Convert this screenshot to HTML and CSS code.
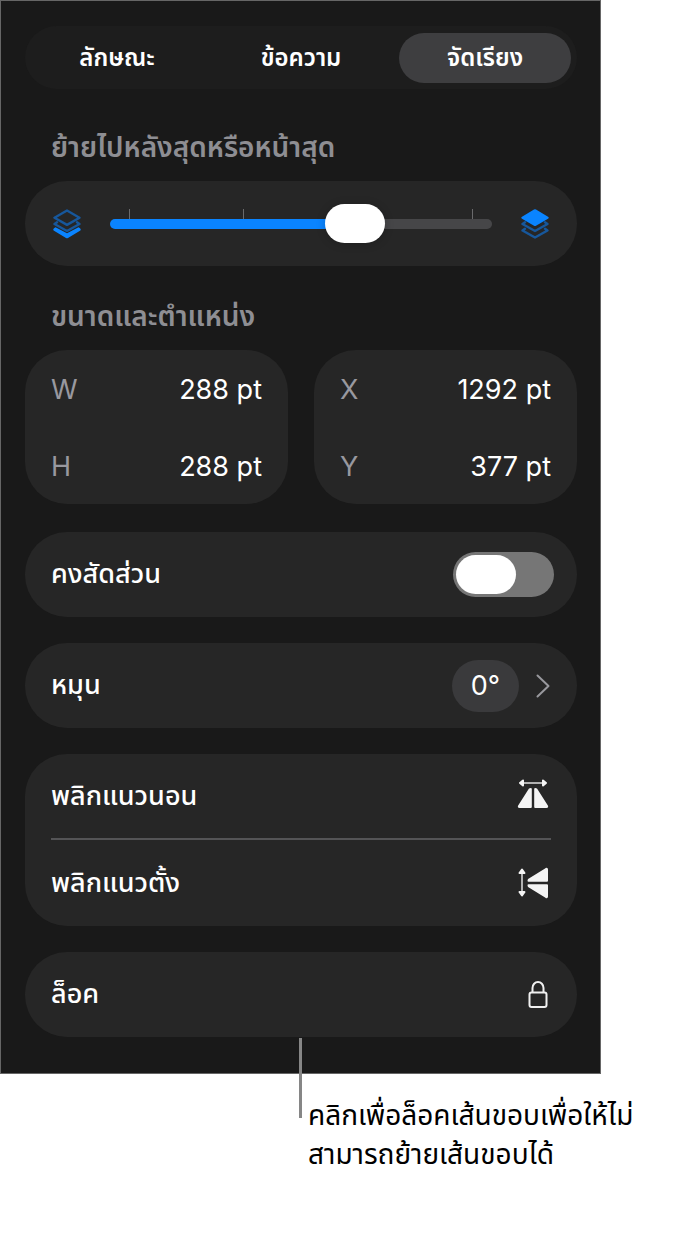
FILE: index.html
```html
<!DOCTYPE html>
<html lang="th">
<head>
  <meta charset="UTF-8">
  <meta name="viewport" content="width=device-width, initial-scale=1.0">
  <title>จัดเรียง</title>
  <link rel="stylesheet" href="styles.css">
</head>
<body>
  <main class="panel">
    <div class="tabs" role="tablist">
      <button class="tab" type="button" role="tab" aria-selected="false">ลักษณะ</button>
      <button class="tab" type="button" role="tab" aria-selected="false">ข้อความ</button>
      <button class="tab active" type="button" role="tab" aria-selected="true">จัดเรียง</button>
    </div>

    <h2 class="heading first"><label for="order">ย้ายไปหลังสุดหรือหน้าสุด</label></h2>
    <div class="card order">
      <svg class="layers" viewBox="0 0 28 30" aria-hidden="true">
        <path class="line" d="M14 1.500 L26.500 8.700 L14 15.900 L1.500 8.700 Z"/>
        <path class="line" d="M4 13.300 L1.500 15 L14 22 L26.500 15 L24 13.300"/>
        <path class="fill" d="M2.500 18.200 L14 24.200 L25.500 18.200 L27 19.200 Q28.500 20.500 27 21.800 L15 29 Q14 29.600 13 29 L1 21.800 Q-.5 20.500 1 19.200 Z"/>
      </svg>
      <div class="slider">
        <div class="ticks"><i></i><i></i><i></i><i></i></div>
        <input type="range" id="order" min="0" max="3" step="1" value="2">
      </div>
      <svg class="layers" viewBox="0 0 28 30" aria-hidden="true">
        <path class="line" d="M4 19.800 L1.500 21.500 L14 28.500 L26.500 21.500 L24 19.800"/>
        <path class="line" d="M4 13.300 L1.500 15 L14 22 L26.500 15 L24 13.300"/>
        <path class="fill" d="M13 .6 Q14 0 15 .6 L27 7.700 Q28.500 8.700 27 9.700 L15 16.800 Q14 17.400 13 16.800 L1 9.700 Q-.5 8.700 1 7.700 Z"/>
      </svg>
    </div>

    <h2 class="heading">ขนาดและตำแหน่ง</h2>
    <div class="fields">
      <div class="card">
        <div class="field"><label for="w">W</label><input type="text" id="w" value="288 pt"></div>
        <div class="field"><label for="h">H</label><input type="text" id="h" value="288 pt"></div>
      </div>
      <div class="card">
        <div class="field"><label for="x">X</label><input type="text" id="x" value="1292 pt"></div>
        <div class="field"><label for="y">Y</label><input type="text" id="y" value="377 pt"></div>
      </div>
    </div>

    <div class="card row">
      <label for="ratio">คงสัดส่วน</label>
      <input class="switch" type="checkbox" role="switch" id="ratio">
    </div>

    <button class="card row" type="button">
      <span>หมุน</span>
      <span class="rotate">
        <span class="angle">0°</span>
        <svg class="chevron" viewBox="0 0 14 24" aria-hidden="true"><path d="M1.500 1.500 L12.500 12 L1.500 22.500"/></svg>
      </span>
    </button>

    <div class="card group">
      <button class="row" type="button">
        <span>พลิกแนวนอน</span>
        <svg class="flip" viewBox="0 0 32 32" aria-hidden="true">
          <path class="arrow" d="M5 3 H27"/>
          <path class="solid" d="M3 3 L6 .5 V5.500 Z M29 3 L26 .5 V5.500 Z"/>
          <path class="solid" d="M12.500 9.500 Q13 9 13.800 9 V27 H2.500 Q1.500 27 2 26 Z M19.500 9.500 Q19 9 18.200 9 V27 H29.500 Q30.500 27 30 26 Z"/>
        </svg>
      </button>
      <button class="row" type="button">
        <span>พลิกแนวตั้ง</span>
        <svg class="flip" viewBox="0 0 32 32" aria-hidden="true">
          <path class="arrow" d="M5 5 V27"/>
          <path class="solid" d="M5 2.500 L7.500 6 H2.500 Z M5 28.500 L7.500 25 H2.500 Z"/>
          <path class="solid" d="M12 12.500 Q11.500 13 11.500 13.800 H30 V2.500 Q30 1.500 29 2 Z M12 19.500 Q11.500 19 11.500 18.200 H30 V29.500 Q30 30.500 29 30 Z"/>
        </svg>
      </button>
    </div>

    <button class="card row" type="button">
      <span>ล็อค</span>
      <svg class="lock" viewBox="0 0 20 28" aria-hidden="true">
        <rect x="1.500" y="11.500" width="17" height="14.500" rx="2"/>
        <path d="M4.500 11.500 V7 A5.500 6 0 0 1 15.500 7 V11.500"/>
      </svg>
    </button>
  </main>

  <p class="callout">คลิกเพื่อล็อคเส้นขอบเพื่อให้ไม่<br>สามารถย้ายเส้นขอบได้</p>
</body>
</html>
```
FILE: styles.css
```css
* {
  box-sizing: border-box;
}
body {
  margin: 0;
  background-color: #fff;
  color: #000;
  font-family: Inter, "Noto Sans Thai", "Noto Sans", sans-serif;
}
button,
input {
  font: inherit;
  color: inherit;
}
button {
  border: none;
  background: none;
  padding: 0;
  text-align: left;
  cursor: pointer;
}
.panel {
  display: flex;
  flex-direction: column;
  max-width: 601px;
  padding: 25px 23px 36px 24px;
  border: 1px solid #666;
  background-color: #191919;
  color: #fff;
  font-size: 27px;
}
.tabs {
  display: grid;
  grid-template-columns: repeat(3, 1fr);
  border-radius: 32px;
  background-color: #1d1d1d;
}
.tab {
  height: 50px;
  margin: 7px 6px 6px;
  padding-top: 2px;
  border-radius: 25px;
  font-size: 24px;
  font-weight: 600;
  text-align: center;
}
.tab.active {
  background-color: #3e3e40;
}
.heading {
  margin: 30px 26px 14px;
  color: #8e8e93;
  font-size: 28px;
  font-weight: 600;
  line-height: 40px;
}
.heading.first {
  margin-top: 38px;
}
.card {
  border-radius: 42px;
  background-color: #262626;
}
.order {
  display: flex;
  align-items: center;
  gap: 29px;
  height: 85px;
  padding: 0 28px;
}
.layers {
  width: 28px;
  height: 30px;
}
.layers .fill {
  fill: #0a84ff;
}
.layers .line {
  fill: none;
  stroke: #17579b;
  stroke-width: 2.4;
  stroke-linejoin: round;
  stroke-linecap: round;
}
.slider {
  flex: 1;
  position: relative;
}
.ticks {
  position: absolute;
  inset: 5px 19px auto;
  display: flex;
  justify-content: space-between;
}
.ticks i {
  width: 1px;
  height: 10px;
  background-color: #6a6a6c;
}
.slider input {
  position: relative;
  display: block;
  appearance: none;
  width: 100%;
  height: 39px;
  margin: 0;
  background: none;
}
.slider input::-webkit-slider-runnable-track {
  height: 10px;
  border-radius: 5px;
  background: linear-gradient(to right, #0a84ff 65%, #464648 65%);
}
.slider input::-webkit-slider-thumb {
  appearance: none;
  width: 60px;
  height: 39px;
  margin-top: -15px;
  border-radius: 20px;
  background-color: #fff;
  box-shadow: 0 1px 10px rgba(0, 0, 0, 0.2);
}
.fields {
  display: grid;
  grid-template-columns: repeat(2, minmax(0, 1fr));
  gap: 26px;
  margin-bottom: 2px;
}
.field {
  display: flex;
  align-items: center;
  height: 77px;
  padding: 2px 26px 0;
}
.field label {
  color: #98989f;
}
.field input {
  flex: 1;
  min-width: 0;
  padding: 0;
  border: none;
  background: none;
  text-align: right;
}
.row {
  display: flex;
  align-items: center;
  justify-content: space-between;
  height: 85px;
  padding: 0 26px;
  font-weight: 500;
}
.card.row {
  margin-top: 26px;
}
.switch {
  appearance: none;
  width: 101px;
  height: 45px;
  margin: 0 -3px 0 0;
  padding: 3px;
  border-radius: 23px;
  background-color: #767676;
}
.switch::before {
  content: "";
  display: block;
  width: 60px;
  height: 39px;
  border-radius: 20px;
  background-color: #fff;
}
.switch:checked {
  background-color: #30d158;
}
.switch:checked::before {
  margin-left: auto;
}
.rotate {
  display: flex;
  align-items: center;
  gap: 17px;
  margin-right: 1px;
  font-weight: 400;
}
.angle {
  width: 67px;
  border-radius: 26px;
  background-color: #3a3a3c;
  line-height: 52px;
  text-align: center;
}
.chevron {
  width: 14px;
  height: 24px;
  fill: none;
  stroke: #98989d;
  stroke-width: 2;
  stroke-linecap: round;
  stroke-linejoin: round;
}
.group {
  margin-top: 26px;
  padding: 0 26px;
}
.group .row {
  width: 100%;
  height: 84px;
  padding: 0 2px 0 0;
}
.group .row + .row {
  height: 88px;
  border-top: 2px solid #545456;
}
.flip {
  width: 32px;
  height: 32px;
  overflow: visible;
}
.flip .arrow {
  stroke: #b0b0b0;
  stroke-width: 2;
}
.flip .solid {
  fill: #f4f4f4;
  stroke: #f4f4f4;
  stroke-width: 2;
  stroke-linejoin: round;
}
.lock {
  width: 20px;
  height: 28px;
  margin-right: 3px;
  fill: none;
  stroke: #f0f0f0;
  stroke-width: 2;
}
.callout {
  position: relative;
  margin: 22px 0 0 299px;
  padding-left: 9px;
  font-size: 28px;
  line-height: 39px;
}
/* leader line up to the lock button */
.callout::before {
  content: "";
  position: absolute;
  left: 0;
  top: -58px;
  width: 3px;
  height: 80px;
  background-color: #868686;
}
```
